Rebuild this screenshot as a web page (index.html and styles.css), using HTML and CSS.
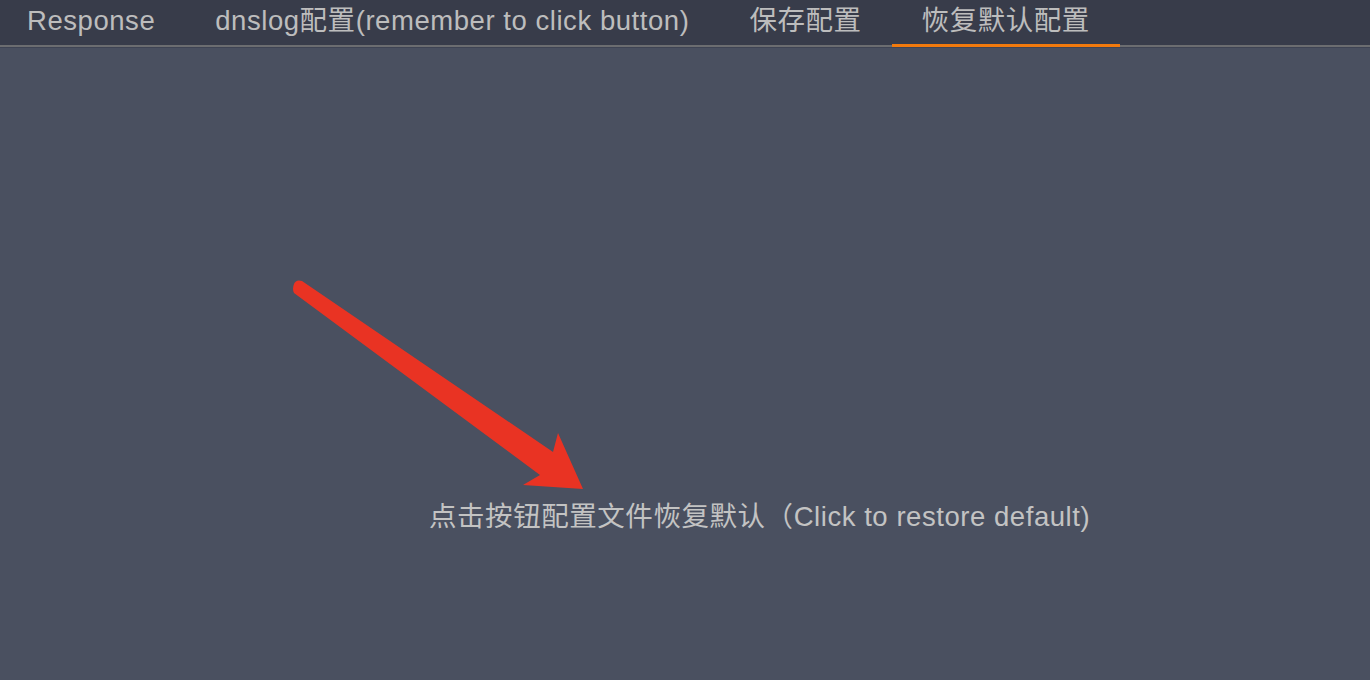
FILE: index.html
```html
<!DOCTYPE html>
<html lang="zh">
<head>
<meta charset="utf-8">
<title>恢复默认配置</title>
<link rel="stylesheet" href="styles.css">
</head>
<body>
<div class="app">
  <nav class="tabs">
    <div class="tab first">Response</div>
    <div class="tab">dnslog配置(remember to click button)</div>
    <div class="tab">保存配置</div>
    <div class="tab active">恢复默认配置</div>
  </nav>
  <main class="content">
    <p class="hint">点击按钮配置文件恢复默认（Click to restore default)</p>
    <svg class="arrow" width="1370" height="680" viewBox="0 0 1370 680">
      <path d="M294 293 L540 475 L523 485 L583 489 L558 433 L553 452 L302 281 Q296 279 294 284 Q292 289 294 293 Z" fill="#e93323"/>
    </svg>
  </main>
</div>
</body>
</html>
```
FILE: styles.css
```css
* { box-sizing: border-box; }
html, body { margin: 0; padding: 0; }
body {
  width: 1370px;
  height: 680px;
  overflow: hidden;
  background: #4a5060;
  font-family: "Liberation Sans", "Noto Sans CJK SC", sans-serif;
}
.app { display: flex; flex-direction: column; height: 680px; }
.tabs {
  display: flex;
  flex: none;
  height: 47px;
  background: #383c4a;
  border-bottom: 2px solid #6c6d70;
}
.tab {
  height: 45px;
  padding: 0 30px;
  font-size: 27.5px;
  letter-spacing: 0.55px;
  line-height: 42px;
  color: #bdbdbd;
  white-space: nowrap;
}
.tab.first { padding-left: 27px; }
.tab.active {
  height: 47px;
  border-bottom: 3px solid #f27a0d;
}
.content {
  position: relative;
  flex: 1;
  background: #4a5060;
  border-top: 1px solid #3f4454;
  padding-top: 452px;
  padding-left: 429px;
}
.hint {
  margin: 0;
  font-size: 27.5px;
  letter-spacing: 0.55px;
  line-height: 34px;
  color: #c3c3c3;
  white-space: nowrap;
}
.arrow {
  position: absolute;
  left: 0;
  top: -48px;
}
```
